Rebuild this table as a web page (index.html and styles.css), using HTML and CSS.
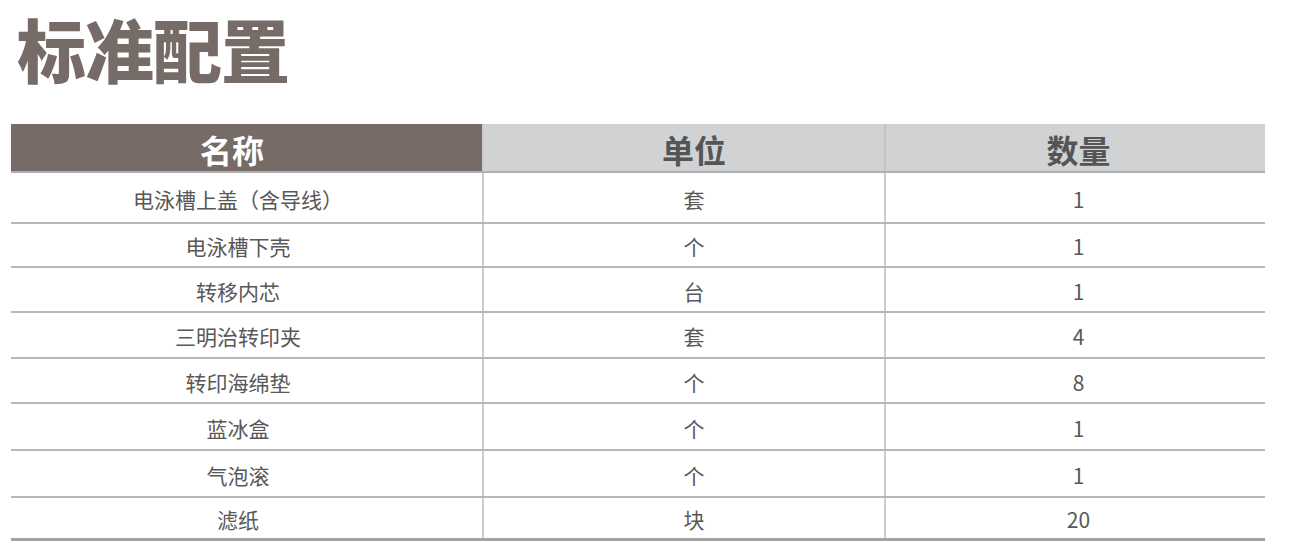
FILE: index.html
```html
<!DOCTYPE html>
<html lang="zh-CN">
<head>
<meta charset="utf-8">
<title>标准配置</title>
<link rel="stylesheet" href="styles.css">
</head>
<body>
<h1 class="title">标准配置</h1>
<div class="table">
  <div class="row head">
    <div class="cell c1 brown">名称</div>
    <div class="cell c2">单位</div>
    <div class="cell c3">数量</div>
  </div>
  <div class="row">
    <div class="cell c1">电泳槽上盖（含导线）</div>
    <div class="cell c2">套</div>
    <div class="cell c3">1</div>
  </div>
  <div class="row">
    <div class="cell c1">电泳槽下壳</div>
    <div class="cell c2">个</div>
    <div class="cell c3">1</div>
  </div>
  <div class="row">
    <div class="cell c1">转移内芯</div>
    <div class="cell c2">台</div>
    <div class="cell c3">1</div>
  </div>
  <div class="row">
    <div class="cell c1">三明治转印夹</div>
    <div class="cell c2">套</div>
    <div class="cell c3">4</div>
  </div>
  <div class="row">
    <div class="cell c1">转印海绵垫</div>
    <div class="cell c2">个</div>
    <div class="cell c3">8</div>
  </div>
  <div class="row">
    <div class="cell c1">蓝冰盒</div>
    <div class="cell c2">个</div>
    <div class="cell c3">1</div>
  </div>
  <div class="row">
    <div class="cell c1">气泡滚</div>
    <div class="cell c2">个</div>
    <div class="cell c3">1</div>
  </div>
  <div class="row last">
    <div class="cell c1">滤纸</div>
    <div class="cell c2">块</div>
    <div class="cell c3">20</div>
  </div>
</div>
</body>
</html>
```
FILE: styles.css
```css
html, body {
  margin: 0;
  padding: 0;
  background: #ffffff;
}
body {
  padding: 0 0 0 11px;
  font-family: "Noto Sans CJK SC", "Noto Sans", sans-serif;
  color: #595757;
}
.title {
  margin: 10px 0 0 6px;
  height: 114px;
  font-size: 69px;
  line-height: 76px;
  font-weight: 900;
  color: #776b67;
  letter-spacing: -1px;
}
.table {
  width: 1254px;
  display: grid;
  grid-template-rows: 49px 51px 44px 45px 46px 45px 47px 47px 43px;
}
.row {
  display: grid;
  grid-template-columns: 471px 402px 381px;
  border-bottom: 2px solid #b7b7b8;
}
.row.last {
  border-bottom: 3px solid #a3a3a4;
}
.row.head {
  border-bottom: 2px solid #b0b0b1;
  background: #d1d2d3;
}
.cell {
  display: flex;
  align-items: center;
  justify-content: center;
  font-size: 21px;
  line-height: 1;
  padding-top: 3px;
}
.c1 {
  padding-right: 17px;
}
.c2 {
  padding-left: 20px;
}
.c3 {
  padding-left: 6px;
}
.c2, .c3 {
  border-left: 2px solid #cbcbcc;
}
.head .cell {
  font-size: 32px;
  font-weight: 700;
  color: #555555;
  padding-top: 2px;
}
.head .c1 {
  padding-right: 29px;
}
.head .brown {
  background: #776b67;
  color: #ffffff;
}
.head .c3 {
  border-left-color: #c4c4c5;
}
```
